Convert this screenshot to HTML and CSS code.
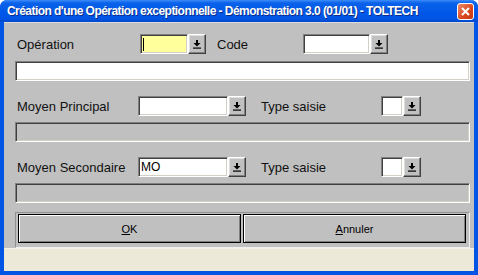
FILE: index.html
```html
<!DOCTYPE html>
<html lang="fr">

<head>
    <meta charset="UTF-8">
    <title>Création d'une Opération exceptionnelle</title>
    <link rel="stylesheet" href="styles.css">
</head>

<body>

    <div class="window">
        <div class="titlebar">
            <span class="title">Création d'une Opération exceptionnelle - Démonstration 3.0 (01/01) - TOLTECH</span>
            <span class="close">
                <svg width="9" height="9" viewBox="0 0 9 9"><path d="M1 1 L8 8 M8 1 L1 8" stroke="#fff" stroke-width="2"/></svg>
            </span>
        </div>

        <div class="client">
            <div class="panel">
                <div class="row row-first">
                    <span class="lbl lbl-op">Opération</span>
                    <span class="field field-yellow w-op"><span class="caret"></span></span>
                    <span class="drop"><svg width="8" height="9" viewBox="0 0 8 9"><path d="M3 0h2v3h2.5L4 6.5 0.5 3H3z" fill="#000"/><rect x="0" y="7.5" width="8" height="1.2" fill="#000"/></svg></span>
                    <span class="lbl lbl-code">Code</span>
                    <span class="field w-code"></span>
                    <span class="drop"><svg width="8" height="9" viewBox="0 0 8 9"><path d="M3 0h2v3h2.5L4 6.5 0.5 3H3z" fill="#000"/><rect x="0" y="7.5" width="8" height="1.2" fill="#000"/></svg></span>
                </div>
                <div class="field wide"></div>

                <div class="row row-mid">
                    <span class="lbl lbl-moyen">Moyen Principal</span>
                    <span class="field w-moyen"></span>
                    <span class="drop"><svg width="8" height="9" viewBox="0 0 8 9"><path d="M3 0h2v3h2.5L4 6.5 0.5 3H3z" fill="#000"/><rect x="0" y="7.5" width="8" height="1.2" fill="#000"/></svg></span>
                    <span class="lbl lbl-type">Type saisie</span>
                    <span class="field w-type"></span>
                    <span class="drop"><svg width="8" height="9" viewBox="0 0 8 9"><path d="M3 0h2v3h2.5L4 6.5 0.5 3H3z" fill="#000"/><rect x="0" y="7.5" width="8" height="1.2" fill="#000"/></svg></span>
                </div>
                <div class="field wide disabled gap-small"></div>

                <div class="row row-mid">
                    <span class="lbl lbl-moyen">Moyen Secondaire</span>
                    <span class="field w-moyen">MO</span>
                    <span class="drop"><svg width="8" height="9" viewBox="0 0 8 9"><path d="M3 0h2v3h2.5L4 6.5 0.5 3H3z" fill="#000"/><rect x="0" y="7.5" width="8" height="1.2" fill="#000"/></svg></span>
                    <span class="lbl lbl-type">Type saisie</span>
                    <span class="field w-type"></span>
                    <span class="drop"><svg width="8" height="9" viewBox="0 0 8 9"><path d="M3 0h2v3h2.5L4 6.5 0.5 3H3z" fill="#000"/><rect x="0" y="7.5" width="8" height="1.2" fill="#000"/></svg></span>
                </div>
                <div class="field wide disabled gap-small"></div>

                <div class="buttons">
                    <button type="button" class="btn"><u>O</u>K</button>
                    <button type="button" class="btn"><u>A</u>nnuler</button>
                </div>
            </div>
            <div class="status"></div>
        </div>
    </div>

</body>

</html>
```

FILE: styles.css
```css
body {
    margin: 0;
    font-family: "Liberation Sans", Arial, sans-serif;
}

.window {
    width: 478px;
    height: 275px;
    display: flex;
    flex-direction: column;
    background: #0055e5;
    border-radius: 7px 7px 0 0;
    overflow: hidden;
}

.titlebar {
    height: 22px;
    display: flex;
    align-items: center;
    justify-content: space-between;
    padding-left: 7px;
    background: linear-gradient(#3d8cf9 0, #0a62ea 3px, #0058e8 12px, #0054e3 19px, #0048cc 22px);
}

.title {
    color: #fff;
    font-weight: bold;
    font-size: 12px;
    letter-spacing: -0.55px;
    white-space: nowrap;
    text-shadow: 1px 1px 0 #0a2e8c;
}

.close {
    width: 15px;
    height: 15px;
    margin-right: 4px;
    display: flex;
    align-items: center;
    justify-content: center;
    border: 1px solid #fff;
    border-radius: 3px;
    background: linear-gradient(135deg, #f08a6b, #d9461c 60%, #c23a12);
}

.client {
    flex: 1;
    display: flex;
    flex-direction: column;
    margin: 0 4px 4px 4px;
}

.panel {
    height: 226px;
    box-sizing: border-box;
    padding: 11px 0 0 11px;
    background: #c0c0c0;
    border-top: 1px solid #dcdcdc;
}

.status {
    flex: 1;
    background: #ece9d8;
    border-top: 1px solid #f4f2ea;
}

.row {
    display: flex;
    align-items: center;
    height: 20px;
}

.row-mid {
    margin-top: 15px;
}

.lbl {
    font-size: 13px;
    color: #111;
    box-sizing: border-box;
    white-space: nowrap;
}

.lbl-op {
    width: 125px;
    padding-left: 2px;
}

.lbl-code {
    width: 97px;
    padding-left: 11px;
}

.lbl-moyen {
    width: 123px;
    padding-left: 2px;
}

.lbl-type {
    width: 135px;
    padding-left: 15px;
}

.field {
    display: flex;
    align-items: center;
    box-sizing: border-box;
    height: 20px;
    padding-left: 2px;
    font-size: 12px;
    background: #fff;
    border: 1px solid;
    border-color: #808080 #fff #fff #808080;
    box-shadow: inset 1px 1px #404040, inset -1px -1px #d4d0c8;
}

.field-yellow {
    background: #ffff9c;
}

.caret {
    width: 1px;
    height: 13px;
    background: #000;
}

.w-op {
    width: 48px;
}

.w-code {
    width: 67px;
}

.w-moyen {
    width: 90px;
}

.w-type {
    width: 22px;
}

.wide {
    width: 455px;
    margin-top: 7px;
}

.disabled {
    background: #c0c0c0;
}

.gap-small {
    margin-top: 6px;
}

.drop {
    width: 18px;
    height: 20px;
    box-sizing: border-box;
    display: flex;
    align-items: center;
    justify-content: center;
    background: #c0c0c0;
    border: 1px solid;
    border-color: #fff #404040 #404040 #fff;
    box-shadow: inset -1px -1px #808080, inset 1px 1px #dfdfdf;
}

.buttons {
    width: 455px;
    height: 36px;
    margin-top: 9px;
    box-sizing: border-box;
    display: flex;
    gap: 2px;
    padding: 1px 3px 3px 2px;
    border: 1px solid;
    border-color: #909090 #f0f0f0 #f0f0f0 #909090;
}

.btn {
    flex: 1;
    height: 29px;
    font-family: "Liberation Sans", Arial, sans-serif;
    font-size: 11px;
    color: #000;
    background: #c0c0c0;
    border: 1px solid #000;
    box-shadow: inset 1px 1px #fff, inset -1px -1px #808080;
    padding: 0;
}
```
